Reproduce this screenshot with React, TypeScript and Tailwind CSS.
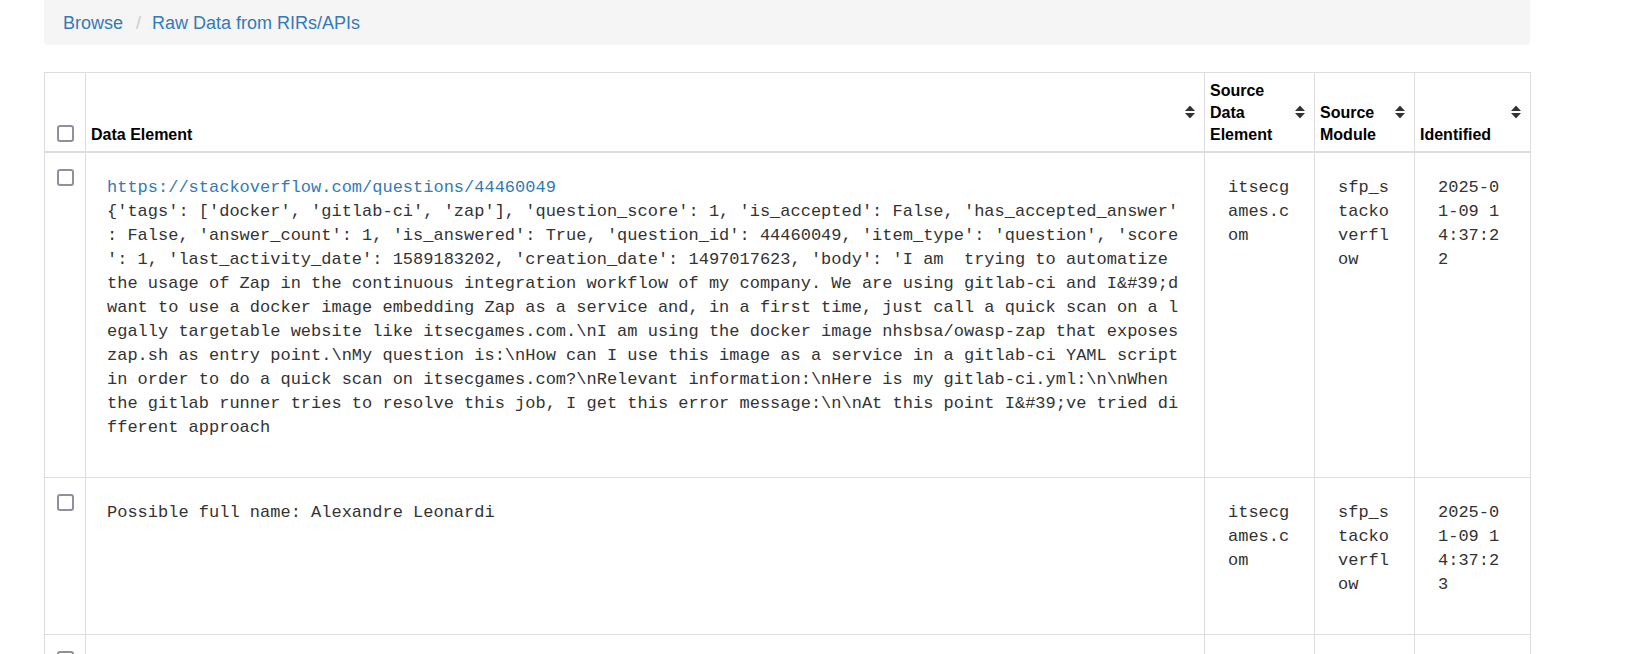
import React from 'react'

const body =
  "{'tags': ['docker', 'gitlab-ci', 'zap'], 'question_score': 1, 'is_accepted': False, 'has_accepted_answer': False, 'answer_count': 1, 'is_answered': True, 'question_id': 44460049, 'item_type': 'question', 'score': 1, 'last_activity_date': 1589183202, 'creation_date': 1497017623, 'body': 'I am  trying to automatize the usage of Zap in the continuous integration workflow of my company. We are using gitlab-ci and I&#39;d want to use a docker image embedding Zap as a service and, in a first time, just call a quick scan on a legally targetable website like itsecgames.com.\\nI am using the docker image nhsbsa/owasp-zap that exposes zap.sh as entry point.\\nMy question is:\\nHow can I use this image as a service in a gitlab-ci YAML script in order to do a quick scan on itsecgames.com?\\nRelevant information:\\nHere is my gitlab-ci.yml:\\n\\nWhen the gitlab runner tries to resolve this job, I get this error message:\\n\\nAt this point I&#39;ve tried different approach"

type Row = {
  url?: string
  text: string
  source: string
  module: string
  identified: string
}

const rows: Row[] = [
  {
    url: 'https://stackoverflow.com/questions/44460049',
    text: body,
    source: 'itsecgames.com',
    module: 'sfp_stackoverflow',
    identified: '2025-01-09 14:37:22',
  },
  {
    text: 'Possible full name: Alexandre Leonardi',
    source: 'itsecgames.com',
    module: 'sfp_stackoverflow',
    identified: '2025-01-09 14:37:23',
  },
  {
    text: 'Possible full name: Zap Gitlab',
    source: 'itsecgames.com',
    module: 'sfp_stackoverflow',
    identified: '2025-01-09 14:37:23',
  },
]

function Checkbox() {
  return <span className="block w-[17px] h-[17px] mx-auto border-2 border-[#8f8f9d] rounded-[3px] bg-white" />
}

function SortIcon() {
  return (
    <svg
      className="absolute right-[9px] top-1/2 -translate-y-1/2"
      width="10"
      height="13"
      viewBox="0 0 10 13"
      fill="#333"
    >
      <path d="M5 0 L10 5.5 L0 5.5 Z" />
      <path d="M0 7.5 L10 7.5 L5 13 Z" />
    </svg>
  )
}

function Th({ children, className = '' }: { children: React.ReactNode; className?: string }) {
  return (
    <th
      className={`relative align-bottom text-left font-bold text-[16px] leading-[22px] text-black border border-[#ddd] border-b-2 pt-[7px] pb-[5px] pl-[5px] pr-[26px] ${className}`}
    >
      {children}
      <SortIcon />
    </th>
  )
}

// firefox-style break-all: wrap between any two characters, punctuation included
const cell =
  'align-top border border-[#ddd] pt-[23px] pb-[37px] pl-[23px] text-[#333] whitespace-pre-wrap break-all [line-break:anywhere]'

export default function App() {
  return (
    <div className="min-h-screen bg-white" style={{ fontFamily: '"Liberation Sans", Arial, sans-serif' }}>
      <div className="ml-[44px] w-[1486px]">
        {/* Breadcrumb */}
        <div className="h-[45px] bg-[#f5f5f5] rounded-b-[4px] flex items-center pl-[19px] pt-[1px] text-[18px]">
          <a className="text-[#337ab7]">Browse</a>
          <span className="text-[#ccc] ml-[13px] mr-[11px]">/</span>
          <a className="text-[#337ab7]">Raw Data from RIRs/APIs</a>
        </div>

        <table className="mt-[27px] w-[1486px] table-fixed border-collapse border border-[#ddd]">
          <colgroup>
            <col className="w-[41px]" />
            <col className="w-[1119px]" />
            <col className="w-[110px]" />
            <col className="w-[100px]" />
            <col className="w-[116px]" />
          </colgroup>
          <thead>
            <tr>
              <th className="align-bottom border border-[#ddd] border-b-2 pb-[9px]">
                <Checkbox />
              </th>
              <Th className="pr-[30px]">Data Element</Th>
              <Th>Source Data Element</Th>
              <Th>Source Module</Th>
              <Th>Identified</Th>
            </tr>
          </thead>
          <tbody className="text-[17px] leading-[24px]" style={{ fontFamily: '"Liberation Mono", "Courier New", monospace' }}>
            {rows.map((r, i) => (
              <tr key={i}>
                <td className="align-top border border-[#ddd] pt-[16px]">
                  <Checkbox />
                </td>
                <td className="align-top border border-[#ddd] pt-[23px] pb-[37px] pl-[21px] pr-[20px] text-[#333] whitespace-pre-wrap break-all [line-break:anywhere]">
                  {r.url && (
                    <>
                      <a className="text-[#337ab7]">{r.url}</a>
                      {'\n'}
                    </>
                  )}
                  {r.text}
                </td>
                <td className={`${cell} pr-[22px]`}>{r.source}</td>
                <td className={`${cell} pr-[22px]`}>{r.module}</td>
                <td className={`${cell} pr-[24px]`}>{r.identified}</td>
              </tr>
            ))}
          </tbody>
        </table>
      </div>
    </div>
  )
}
